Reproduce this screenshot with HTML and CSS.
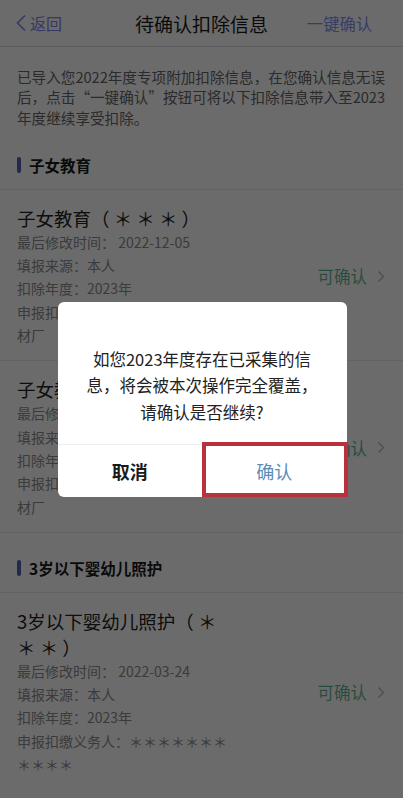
FILE: index.html
```html
<!DOCTYPE html>
<html lang="zh-CN">

<head>
	<meta charset="UTF-8">
	<meta name="viewport" content="width=device-width, initial-scale=1.0">
	<title>待确认扣除信息</title>
	<link rel="stylesheet" href="styles.css">
</head>

<body>
	<div class="page">
		<div class="navbar">
			<div class="back">
				<svg width="12" height="18" viewBox="0 0 12 18"><path d="M10 1.5 L2.5 9 L10 16.5" fill="none" stroke="currentColor" stroke-width="1.6"/></svg>
				<span>返回</span>
			</div>
			<div class="navTitle">待确认扣除信息</div>
			<div class="navAction">一键确认</div>
		</div>

		<p class="intro">已导入您2022年度专项附加扣除信息，在您确认信息无误后，点击“一键确认”按钮可将以下扣除信息带入至2023年度继续享受扣除。</p>

		<div class="section">
			<div class="sectionTitle">子女教育</div>
			<div class="item">
				<div class="itemInfo">
					<div class="itemName">子女教育（ ＊ ＊ ＊ ）</div>
					<div class="itemLine">最后修改时间： 2022-12-05</div>
					<div class="itemLine">填报来源：本人</div>
					<div class="itemLine">扣除年度：2023年</div>
					<div class="itemLine">申报扣缴义务人：＊＊＊＊＊＊建材厂</div>
				</div>
				<div class="itemStatus">
					<span>可确认</span>
					<svg width="8" height="13" viewBox="0 0 8 13"><path d="M1.5 1.5 L6.5 6.5 L1.5 11.5" fill="none" stroke="currentColor" stroke-width="1.2"/></svg>
				</div>
			</div>
			<div class="item">
				<div class="itemInfo">
					<div class="itemName">子女教育（ ＊ ＊ ＊ ）</div>
					<div class="itemLine">最后修改时间： 2022-12-05</div>
					<div class="itemLine">填报来源：本人</div>
					<div class="itemLine">扣除年度：2023年</div>
					<div class="itemLine">申报扣缴义务人：＊＊＊＊＊＊建材厂</div>
				</div>
				<div class="itemStatus">
					<span>可确认</span>
					<svg width="8" height="13" viewBox="0 0 8 13"><path d="M1.5 1.5 L6.5 6.5 L1.5 11.5" fill="none" stroke="currentColor" stroke-width="1.2"/></svg>
				</div>
			</div>
		</div>

		<div class="section">
			<div class="sectionTitle">3岁以下婴幼儿照护</div>
			<div class="item">
				<div class="itemInfo">
					<div class="itemName">3岁以下婴幼儿照护（ ＊ ＊ ＊ ）</div>
					<div class="itemLine">最后修改时间： 2022-03-24</div>
					<div class="itemLine">填报来源：本人</div>
					<div class="itemLine">扣除年度：2023年</div>
					<div class="itemLine">申报扣缴义务人：＊＊＊＊＊＊＊＊＊＊＊</div>
				</div>
				<div class="itemStatus">
					<span>可确认</span>
					<svg width="8" height="13" viewBox="0 0 8 13"><path d="M1.5 1.5 L6.5 6.5 L1.5 11.5" fill="none" stroke="currentColor" stroke-width="1.2"/></svg>
				</div>
			</div>
		</div>
	</div>

	<div class="mask">
		<div class="dialog">
			<div class="dialogText">如您2023年度存在已采集的信息，将会被本次操作完全覆盖，请确认是否继续?</div>
			<div class="dialogButtons">
				<button class="dialogButton cancel">取消</button>
				<button class="dialogButton confirm">确认<span class="highlight"></span></button>
			</div>
		</div>
	</div>
</body>

</html>
```

FILE: styles.css
```css
body,
html {
	margin: 0;
	padding: 0;
	height: 100%;
	overflow: hidden;
}

body {
	font-family: "Noto Sans CJK SC", "Noto Sans", sans-serif;
	background-color: #ffffff;
	color: #222222;
}

.page {
	height: 100%;
}

.navbar {
	display: flex;
	align-items: center;
	justify-content: space-between;
	height: 46px;
	padding: 0 31px 0 15px;
	border-bottom: 1px solid #dcdcdc;
	box-sizing: content-box;
	position: relative;
}

.back {
	display: flex;
	align-items: center;
	gap: 3px;
	color: #7f86f0;
	font-size: 16px;
}

.navTitle {
	position: absolute;
	left: 0;
	right: 0;
	text-align: center;
	font-size: 19px;
	color: #1a1a1a;
	pointer-events: none;
}

.navAction {
	color: #8193f2;
	font-size: 16.3px;
}

.intro {
	margin: 0;
	padding: 20px 17px 2px;
	font-size: 14.6px;
	line-height: 20.3px;
	color: #666666;
}

.section {
	padding-top: 12px;
}

.sectionTitle {
	display: flex;
	align-items: center;
	gap: 8px;
	height: 47px;
	padding: 0 17px;
	border-bottom: 1px solid #ececec;
	font-size: 15.5px;
	font-weight: 700;
	color: #1a1a1a;
}

.sectionTitle::before {
	content: "";
	width: 4px;
	height: 16px;
	border-radius: 2px;
	background-color: #5063b8;
}

.item {
	display: flex;
	align-items: center;
	justify-content: space-between;
	padding: 15px 18px 13px 17px;
	border-bottom: 1px solid #ececec;
}

.section:last-child .item:last-child {
	border-bottom: none;
}

.itemInfo {
	width: 218px;
}

.itemName {
	font-size: 18.5px;
	line-height: 26px;
	color: #222222;
}

.itemLine {
	font-size: 14px;
	line-height: 23.3px;
	color: #8c8c8c;
}

.itemStatus {
	display: flex;
	align-items: center;
	gap: 10px;
	font-size: 16.5px;
	color: #5fb88f;
}

.itemStatus svg {
	color: #b5b5b5;
}

.mask {
	position: fixed;
	inset: 0;
	display: flex;
	align-items: center;
	justify-content: center;
	background-color: rgba(0, 0, 0, 0.58);
}

.dialog {
	width: 289px;
	height: 195px;
	margin-left: 1px;
	background-color: #ffffff;
	border-radius: 6px;
	display: flex;
	flex-direction: column;
}

.dialogText {
	flex: 1;
	padding: 44px 27px 0;
	font-size: 16.5px;
	line-height: 26.5px;
	text-align: center;
	color: #222222;
}

.dialogButtons {
	display: flex;
	height: 52px;
	border-top: 1px solid #eeeeee;
}

.dialogButton {
	flex: 1;
	border: none;
	background: none;
	font-family: inherit;
	font-size: 18px;
	padding: 0;
	position: relative;
}

.cancel {
	color: #1a1a1a;
	font-weight: 700;
}

.confirm {
	color: #5a8cb8;
}

.highlight {
	position: absolute;
	top: -3px;
	left: 0;
	right: -1px;
	bottom: 0;
	border: 4px solid #b9313d;
}
```
